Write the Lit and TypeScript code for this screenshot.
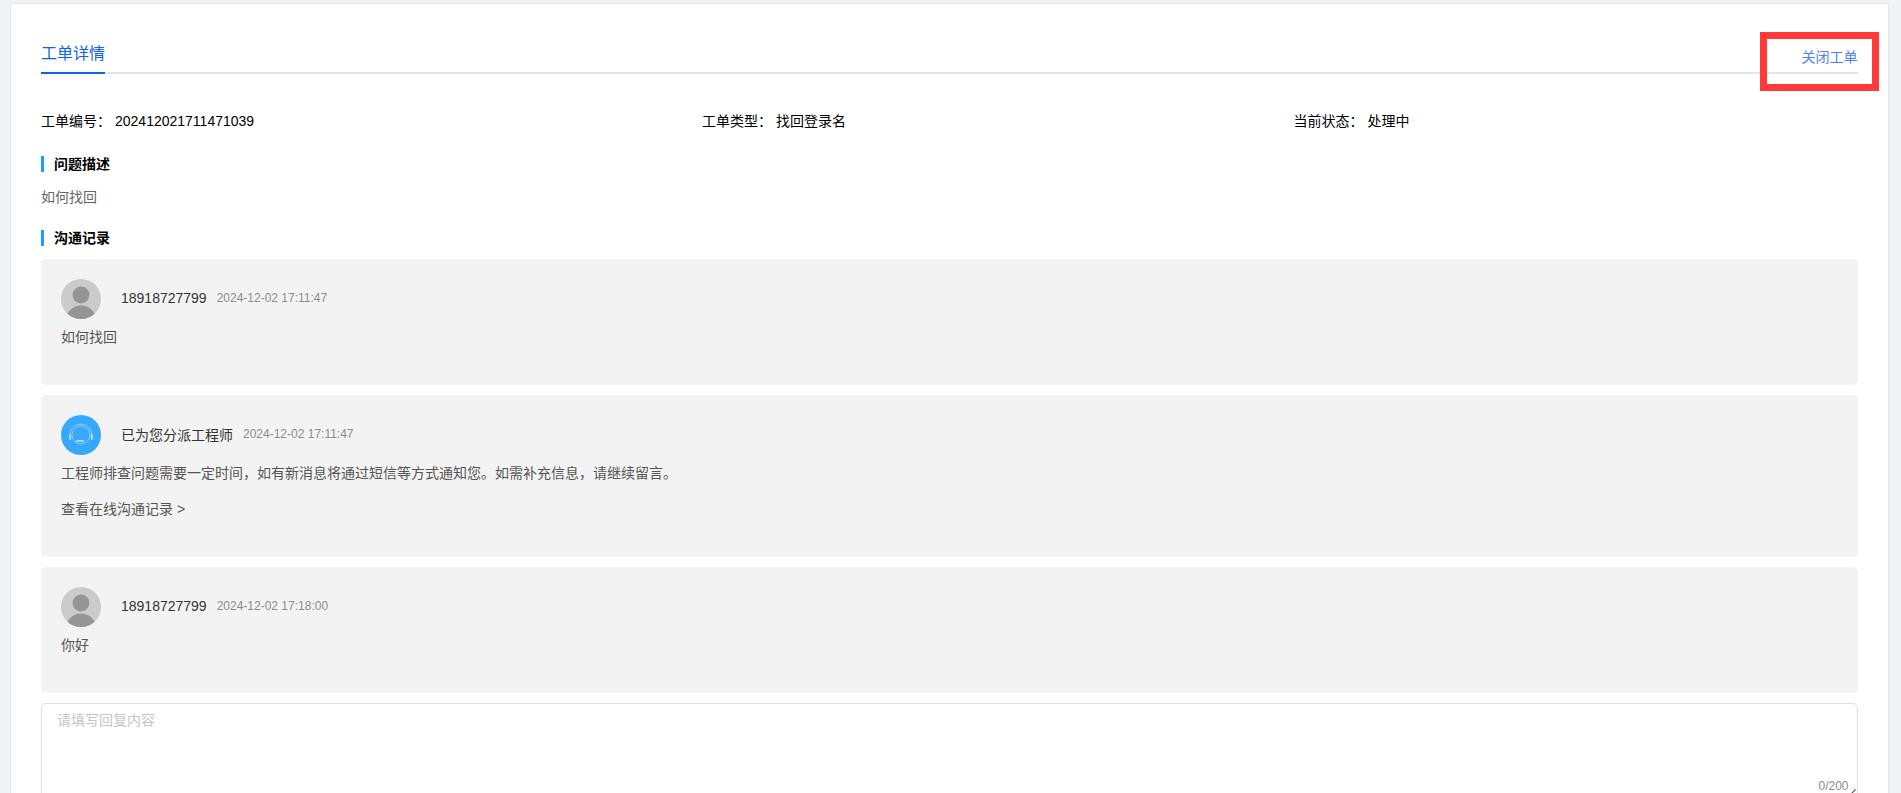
import { LitElement, html, css, svg } from "lit";
import { customElement } from "lit/decorators.js";

const userAvatar = svg`<svg class="avatar" width="40" height="40" viewBox="0 0 40 40">
  <defs><clipPath id="c"><circle cx="20" cy="20" r="20"/></clipPath></defs>
  <circle cx="20" cy="20" r="20" fill="#cbcbcb"/>
  <circle cx="20" cy="16" r="8.4" fill="#959595"/>
  <ellipse cx="20" cy="40" rx="14.5" ry="13.4" fill="#959595" clip-path="url(#c)"/>
</svg>`;

const agentAvatar = svg`<svg class="avatar" width="40" height="40" viewBox="0 0 40 40">
  <circle cx="20" cy="20" r="20" fill="#36a9fb"/>
  <g fill="none" stroke="#8fcbf8" stroke-width="1">
    <circle cx="20" cy="20" r="9"/>
    <path d="M9.5 19 C9.5 6 30.5 6 30.5 19"/>
  </g>
  <g fill="#a6d6f8">
    <rect x="8" y="19" width="2.2" height="6" rx="1"/>
    <rect x="29.8" y="19" width="2.2" height="6" rx="1"/>
    <rect x="15" y="25" width="8.5" height="2" rx="1"/>
  </g>
</svg>`;

@customElement("app-root")
export class AppRoot extends LitElement {
  static styles = css`
    :host {
      display: block;
      height: 793px;
      overflow: hidden;
      background: #f2f3f7;
      font-family: "Liberation Sans", "Noto Sans CJK SC", sans-serif;
      font-size: 14px;
      color: #000;
    }
    .page {
      position: relative;
      box-sizing: border-box;
      margin: 3px 12.5px 0 10px;
      padding: 30px 30px 0;
      height: 790px;
      overflow: hidden;
      background: #fff;
      border: 1px solid #e6e6e6;
      border-bottom: none;
    }
    .tabs {
      display: flex;
      justify-content: space-between;
      height: 40px;
      box-sizing: border-box;
      border-bottom: 2px solid #e4e4e4;
    }
    .tab {
      height: 40px;
      box-sizing: border-box;
      line-height: 40px;
      font-size: 16px;
      color: #0f62e6;
      border-bottom: 2px solid #0f62e6;
    }
    .close {
      line-height: 46px;
      font-size: 14px;
      color: #4a80ff;
    }
    .info {
      display: grid;
      grid-template-columns: 661px 591.5px 1fr;
      margin-top: 37px;
      line-height: 20px;
    }
    .info .label { margin-right: 4px; }
    .section {
      height: 16px;
      line-height: 16px;
      font-weight: 700;
      border-left: 3px solid #1a9dff;
      padding-left: 10px;
    }
    .s1 { margin-top: 25px; }
    .s2 { margin-top: 23px; }
    .desc {
      margin-top: 15px;
      line-height: 20px;
      color: #666;
    }
    .records {
      display: flex;
      flex-direction: column;
      gap: 10px;
      margin-top: 13px;
    }
    .record {
      padding: 20px 20px 38px;
      background: #f3f3f3;
      border-radius: 5px;
    }
    .head {
      display: flex;
      align-items: center;
      height: 40px;
    }
    .avatar { display: block; flex: none; margin-right: 20px; }
    .name { color: #333; margin-right: 10px; position: relative; top: -1px; }
    .time { color: #8c8c8c; font-size: 12px; position: relative; top: -1px; }
    .body {
      display: flex;
      flex-direction: column;
      gap: 16px;
      margin-top: 8px;
      line-height: 20px;
      font-size: 14px;
      color: #555;
    }
    .reply {
      position: relative;
      box-sizing: border-box;
      height: 120px;
      margin-top: 10px;
      padding: 6px 15px 4px;
      border: 1px solid #e2e2e2;
      border-radius: 5px;
      line-height: 20px;
      color: #c4c6cb;
    }
    .count {
      position: absolute;
      right: 8px;
      top: 72px;
      font-size: 12px;
      line-height: 20px;
      color: #8c8c8c;
    }
    .grip {
      position: absolute;
      right: 1px;
      top: 85px;
    }
    .mark {
      position: absolute;
      left: 1749px;
      top: 28px;
      box-sizing: border-box;
      width: 119px;
      height: 59px;
      border: 7px solid #ff3a3a;
    }
  `;

  render() {
    return html`
      <div class="page">
        <div class="tabs">
          <div class="tab">工单详情</div>
          <div class="close">关闭工单</div>
        </div>
        <div class="info">
          <div><span class="label">工单编号：</span>202412021711471039</div>
          <div><span class="label">工单类型：</span>找回登录名</div>
          <div><span class="label">当前状态：</span>处理中</div>
        </div>
        <div class="section s1">问题描述</div>
        <div class="desc">如何找回</div>
        <div class="section s2">沟通记录</div>
        <div class="records">
          <div class="record">
            <div class="head">${userAvatar}<span class="name">18918727799</span><span class="time">2024-12-02 17:11:47</span></div>
            <div class="body"><div>如何找回</div></div>
          </div>
          <div class="record">
            <div class="head">${agentAvatar}<span class="name">已为您分派工程师</span><span class="time">2024-12-02 17:11:47</span></div>
            <div class="body">
              <div>工程师排查问题需要一定时间，如有新消息将通过短信等方式通知您。如需补充信息，请继续留言。</div>
              <div>查看在线沟通记录 &gt;</div>
            </div>
          </div>
          <div class="record">
            <div class="head">${userAvatar}<span class="name">18918727799</span><span class="time">2024-12-02 17:18:00</span></div>
            <div class="body"><div>你好</div></div>
          </div>
        </div>
        <div class="reply">
          请填写回复内容
          <span class="count">0/200</span>
          <svg class="grip" width="9" height="9" viewBox="0 0 9 9"><path d="M0.5 8.5 L8.5 0.5 M4.5 8.5 L8.5 4.5" stroke="#555" stroke-width="1.1" fill="none"/></svg>
        </div>
        <div class="mark"></div>
      </div>
    `;
  }
}
